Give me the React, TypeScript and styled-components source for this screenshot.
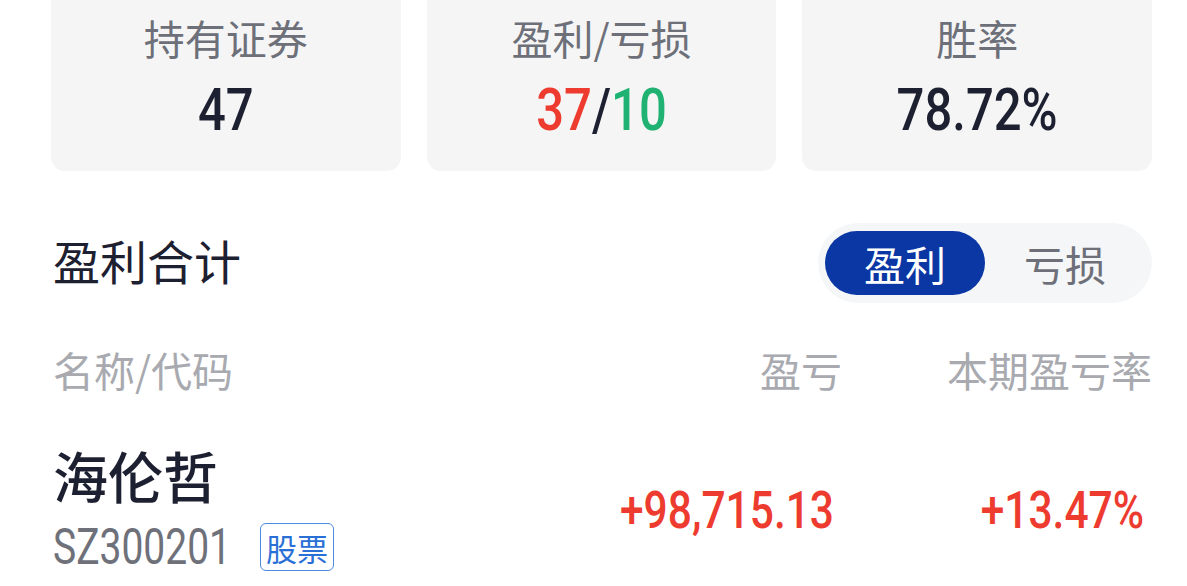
import styled, { createGlobalStyle } from "styled-components";

const GlobalStyle = createGlobalStyle`
  html, body {
    margin: 0;
    padding: 0;
    background: #ffffff;
  }
  body {
    font-family: "Noto Sans CJK SC", sans-serif;
  }
`;

// DIN-like digits: Roboto stretched vertically so widths stay true in layout
const NUM_FONT = `Roboto, "Noto Sans CJK SC", sans-serif`;

const Page = styled.div`
  width: 1187px;
  height: 586px;
  overflow: hidden;
  padding: 0 35px 0 51px;
  box-sizing: border-box;
`;

const StatsRow = styled.div`
  display: grid;
  grid-template-columns: repeat(3, 1fr);
  gap: 26px;
  margin-top: -20px;
`;

const StatCard = styled.div`
  background: #f5f5f5;
  border-radius: 14px;
  padding: 29px 0 30px;
  display: flex;
  flex-direction: column;
  align-items: center;
  gap: 16px;
`;

const StatLabel = styled.div`
  font-size: 41px;
  line-height: 56px;
  color: #6d7079;
`;

const StatValue = styled.div`
  font-family: ${NUM_FONT};
  font-size: 49px;
  font-weight: 500;
  line-height: 60px;
  color: #1d2030;
  transform: scaleY(1.2);
`;

const Tone = styled.span<{ $tone: "up" | "down" }>`
  color: ${(p) => (p.$tone === "up" ? "#ee3b2f" : "#1fb272")};
`;

const SectionHeader = styled.div`
  display: flex;
  justify-content: space-between;
  align-items: center;
  margin-top: 52px;
`;

const Title = styled.div`
  font-size: 47px;
  font-weight: 400;
  color: #1d2030;
  padding: 0 0 8px 2px;
`;

const Toggle = styled.div`
  display: flex;
  padding: 8px 7px;
  background: #f5f6f7;
  border-radius: 40px;
`;

const ToggleOption = styled.div<{ $active?: boolean }>`
  width: 160px;
  height: 64px;
  border-radius: 32px;
  display: flex;
  align-items: center;
  justify-content: center;
  font-size: 41px;
  color: ${(p) => (p.$active ? "#ffffff" : "#6d7079")};
  background: ${(p) => (p.$active ? "#0a37a3" : "transparent")};
`;

const Columns = styled.div`
  display: grid;
  grid-template-columns: 1fr 300px 310px;
  align-items: center;
`;

const TableHeader = styled(Columns)`
  margin-top: 36px;
  height: 60px;
`;

const HeadCell = styled.div<{ $right?: boolean }>`
  font-size: 41px;
  color: #a8aab0;
  text-align: ${(p) => (p.$right ? "right" : "left")};
  padding-left: ${(p) => (p.$right ? "0" : "2px")};
`;

const Row = styled(Columns)`
  margin-top: 43px;
`;

const NameCell = styled.div`
  display: flex;
  flex-direction: column;
  padding-left: 2px;
`;

const Name = styled.div`
  font-size: 55px;
  font-weight: 500;
  line-height: 64px;
  color: #1d2030;
`;

const CodeLine = styled.div`
  display: flex;
  align-items: center;
  margin-top: 17px;
`;

const Code = styled.div`
  font-family: ${NUM_FONT};
  font-size: 39px;
  line-height: 48px;
  color: #6f717a;
  transform: scaleY(1.3);
`;

const Tag = styled.div`
  margin-left: 29px;
  height: 48px;
  box-sizing: border-box;
  border: 1.5px solid #4b8be0;
  border-radius: 6px;
  padding: 0 5px;
  display: flex;
  align-items: center;
  font-size: 31px;
  color: #2a6fd6;
`;

const Amount = styled.div`
  font-family: ${NUM_FONT};
  font-size: 42.5px;
  font-weight: 500;
  color: #ee3b2f;
  text-align: right;
  padding-right: 8px;
  margin-top: 8px;
  transform: scaleY(1.22);
`;

const stats = [
  { label: "持有证券", value: <>47</> },
  {
    label: "盈利/亏损",
    value: (
      <>
        <Tone $tone="up">37</Tone>/<Tone $tone="down">10</Tone>
      </>
    ),
  },
  { label: "胜率", value: <>78.72%</> },
];

export default function App() {
  return (
    <>
      <GlobalStyle />
      <Page>
        <StatsRow>
          {stats.map((s) => (
            <StatCard key={s.label}>
              <StatLabel>{s.label}</StatLabel>
              <StatValue>{s.value}</StatValue>
            </StatCard>
          ))}
        </StatsRow>

        <SectionHeader>
          <Title>盈利合计</Title>
          <Toggle>
            <ToggleOption $active>盈利</ToggleOption>
            <ToggleOption>亏损</ToggleOption>
          </Toggle>
        </SectionHeader>

        <TableHeader>
          <HeadCell>名称/代码</HeadCell>
          <HeadCell $right>盈亏</HeadCell>
          <HeadCell $right>本期盈亏率</HeadCell>
        </TableHeader>

        <Row>
          <NameCell>
            <Name>海伦哲</Name>
            <CodeLine>
              <Code>SZ300201</Code>
              <Tag>股票</Tag>
            </CodeLine>
          </NameCell>
          <Amount>+98,715.13</Amount>
          <Amount>+13.47%</Amount>
        </Row>
      </Page>
    </>
  );
}
